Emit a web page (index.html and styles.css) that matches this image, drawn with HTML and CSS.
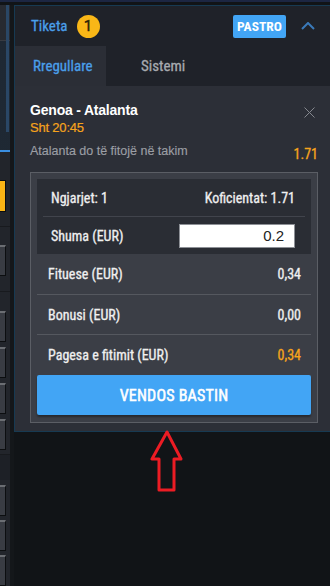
FILE: index.html
```html
<!DOCTYPE html>
<html lang="sq">
<head>
<meta charset="utf-8">
<title>Tiketa</title>
<link rel="stylesheet" href="styles.css">
</head>
<body>
<div class="topline"></div>
<div class="main">
  <aside class="sidebar">
    <div class="scrollbar"></div>
    <div class="sb-top"></div>
    <div class="sb-line"></div>
    <div class="sb-tex"></div>
    <div class="sb-blue"></div>
    <div class="sb-sec sb-sec1"><div class="tile tile-yellow"></div></div>
    <div class="sb-sep"></div>
    <div class="sb-sec sb-sec2"><div class="tile"></div></div>
    <div class="sb-sep"></div>
    <div class="sb-sec sb-sec3"><div class="tile"></div><div class="tile"></div><div class="tile"></div><div class="tile"></div></div>
    <div class="sb-sep"></div>
    <div class="sb-dark"></div>
    <div class="sb-sec sb-sec4"><div class="tile"></div><div class="tile"></div><div class="tile"></div></div>
  </aside>
  <div class="gapcol"></div>
  <div class="rightcol">
    <section class="panel">
      <header class="head">
        <span class="head-title">Tiketa</span>
        <span class="badge">1</span>
        <span class="spacer"></span>
        <button class="clear-btn">PASTRO</button>
        <svg class="chev" width="14" height="8" viewBox="0 0 14 8"><polyline points="1,7 7,1 13,7" fill="none" stroke="#3a7ab9" stroke-width="2"/></svg>
      </header>
      <nav class="tabs">
        <div class="tab tab-active">Rregullare</div>
        <div class="tab">Sistemi</div>
      </nav>
      <div class="content">
        <div class="match-row">
          <div class="match-title">Genoa - Atalanta</div>
          <svg class="close" width="11" height="11" viewBox="0 0 11 11"><path d="M0.5 0.5 L10.5 10.5 M10.5 0.5 L0.5 10.5" stroke="#85888e" stroke-width="1" fill="none"/></svg>
        </div>
        <div class="match-time">Sht 20:45</div>
        <div class="pick-row">
          <span class="pick">Atalanta do të fitojë në takim</span>
          <span class="odd">1.71</span>
        </div>
        <div class="slip">
          <div class="slip-inner">
            <div class="irow irow-sep">
              <span>Ngjarjet: 1</span>
              <span>Koficientat: 1.71</span>
            </div>
            <div class="irow">
              <span>Shuma (EUR)</span>
              <input class="stake" type="text" value="0.2">
            </div>
          </div>
          <div class="srow srow-sep srow-a"><span>Fituese (EUR)</span><span>0,34</span></div>
          <div class="srow srow-sep srow-b"><span>Bonusi (EUR)</span><span>0,00</span></div>
          <div class="srow srow-c"><span>Pagesa e fitimit (EUR)</span><span class="orange">0,34</span></div>
          <button class="place">VENDOS BASTIN</button>
        </div>
      </div>
    </section>
    <svg class="arrow" width="36" height="66" viewBox="0 0 36 66">
      <polygon points="17,3 2,30 9,30 9,61 24,61 24,30 31,30" fill="none" stroke="#ec1c24" stroke-width="3" stroke-linejoin="round"/>
    </svg>
  </div>
</div>
</body>
</html>
```
FILE: styles.css
```css
* { box-sizing: border-box; }
html, body { margin: 0; padding: 0; }
body {
  width: 330px;
  height: 586px;
  overflow: hidden;
  background: #111417;
  font-family: "Liberation Sans", Arial, sans-serif;
  color: #ececec;
}
.topline { height: 2px; background: #1c2642; }
.main {
  display: flex;
  padding-top: 3px;
  height: 584px;
}
.sidebar {
  position: relative;
  width: 10px;
  flex: none;
  display: flex;
  flex-direction: column;
  background: #22252b;
}
.scrollbar {
  position: absolute;
  left: 6px;
  top: 0;
  width: 3px;
  height: 127px;
  background: #2a4766;
}
.sb-top { height: 40px; background: #272a31; }
.sb-line { height: 1px; background: #383b42; }
.sb-tex {
  height: 125px;
  background-color: #1a212a;
  background-image: radial-gradient(#24303d 0.6px, transparent 0.8px);
  background-size: 2px 2px;
}
.sb-blue { height: 2px; background: #3a8ee0; }
.sb-sec { display: flex; flex-direction: column; gap: 5px; background: #22252b; }
.sb-sec1 { padding: 28px 0 14px; }
.sb-sec2 { padding: 18px 0 15px; }
.sb-sec3 { padding: 19px 0 4px; }
.sb-sec4 { padding: 5px 0 0; gap: 4px; }
.sb-sep { height: 1px; background: #181a1e; }
.sb-dark { height: 29px; background: #1d2026; }
.tile {
  width: 6px;
  height: 31px;
  flex: none;
  background: #393c43;
  border-top: 2px solid #6b6e73;
  border-right: 1px solid #0c0e10;
  border-bottom: 1px solid #0c0e10;
}
.tile-yellow {
  height: 32px;
  background: #fbb515;
  border-top: 1px solid #0c0e10;
}
.gapcol { width: 4px; flex: none; background: #14171a; }
.rightcol { flex: 1; display: flex; flex-direction: column; }
.panel {
  border-left: 1px solid #173a52;
  border-top: 1px solid #173a52;
  border-bottom: 1px solid #173a52;
  background: #2c2f37;
}
.head {
  height: 40px;
  display: flex;
  align-items: center;
  padding: 0 15px 0 16px;
  background: #1f2229;
}
.head-title, .tab, .clear-btn, .slip, .place, .odd {
  font-family: "Liberation Sans Narrow", "Roboto Condensed", Roboto, sans-serif;
  -webkit-text-stroke: 0.3px currentColor;
}
.head-title { font-size: 15px; color: #4a9fea; }
.badge {
  margin-left: 9px;
  width: 23px;
  height: 23px;
  border-radius: 50%;
  background: #f9b717;
  color: #2b2208;
  font-family: "Liberation Sans Narrow", Roboto, sans-serif;
  font-size: 15px;
  display: flex;
  align-items: center;
  justify-content: center;
  -webkit-text-stroke: 0.4px currentColor;
}
.spacer { flex: 1; }
.clear-btn {
  width: 53px;
  height: 23px;
  border: 0;
  border-radius: 2px;
  background: #42a5f5;
  color: #fff;
  font-size: 13.5px;
  font-weight: bold;
  padding: 0;
  -webkit-text-stroke: 0;
}
.chev { margin-left: 15px; display: block; }
.tabs { display: flex; height: 40px; background: #1f2229; }
.tab {
  display: flex;
  align-items: center;
  font-size: 15px;
  color: #a8abb0;
}
.tab-active { width: 91px; padding-left: 18px; background: #2b2e36; color: #4a9fea; }
.tab + .tab { padding-left: 35px; }
.content { padding: 16px 12px 8px 15px; }
.match-row { display: flex; justify-content: space-between; align-items: center; height: 16px; }
.match-title { font-size: 14px; font-weight: bold; color: #fff; letter-spacing: -0.2px; line-height: 16px; }
.close { display: block; margin-right: 3px; margin-top: 4px; }
.match-time { margin-top: 2px; font-size: 13px; line-height: 16px; color: #f7a41c; letter-spacing: -0.2px; -webkit-text-stroke: 0.2px currentColor; }
.pick-row { margin-top: 7px; display: flex; justify-content: space-between; align-items: flex-end; line-height: 16px; }
.pick { font-size: 12.5px; color: #9b9ea4; -webkit-text-stroke: 0.15px currentColor; }
.odd { font-size: 14px; color: #f7a41c; position: relative; top: 3px; }
.slip {
  margin-top: 13px;
  border: 1px solid #5b5e65;
  background: #3b3e46;
  padding: 6px 6px 7px;
  font-size: 14px;
  color: #f0f0f0;
}
.slip-inner { background: #2a2d34; padding: 0 6px; }
.irow {
  height: 37px;
  display: flex;
  align-items: center;
  justify-content: space-between;
  padding: 0 10px 0 8px;
}
.irow-sep { height: 38px; border-bottom: 1px solid #41444c; }
.stake {
  width: 116px;
  height: 24px;
  border: 1px solid #8d9096;
  background: #fff;
  text-align: right;
  padding: 0 10px;
  font-family: "Liberation Sans", Arial, sans-serif;
  font-size: 15px;
  color: #222;
  outline: none;
  -webkit-text-stroke: 0;
}
.srow {
  display: flex;
  align-items: center;
  justify-content: space-between;
  padding: 0 10px 0 11px;
  height: 40px;
}
.srow-sep { border-bottom: 1px solid #55585f; }
.srow-a { height: 41px; }
.srow-b { height: 40px; }
.orange { color: #f7a41c; }
.place {
  display: block;
  width: 100%;
  height: 40px;
  border: 0;
  border-radius: 2px;
  background: #42a5f5;
  color: #fff;
  font-size: 16px;
  letter-spacing: 0.2px;
  -webkit-text-stroke: 0.5px #fff;
  box-shadow: 0 2px 2px rgba(0,0,0,0.35);
}
.arrow { display: block; margin-left: 136px; margin-top: -3px; }
```
